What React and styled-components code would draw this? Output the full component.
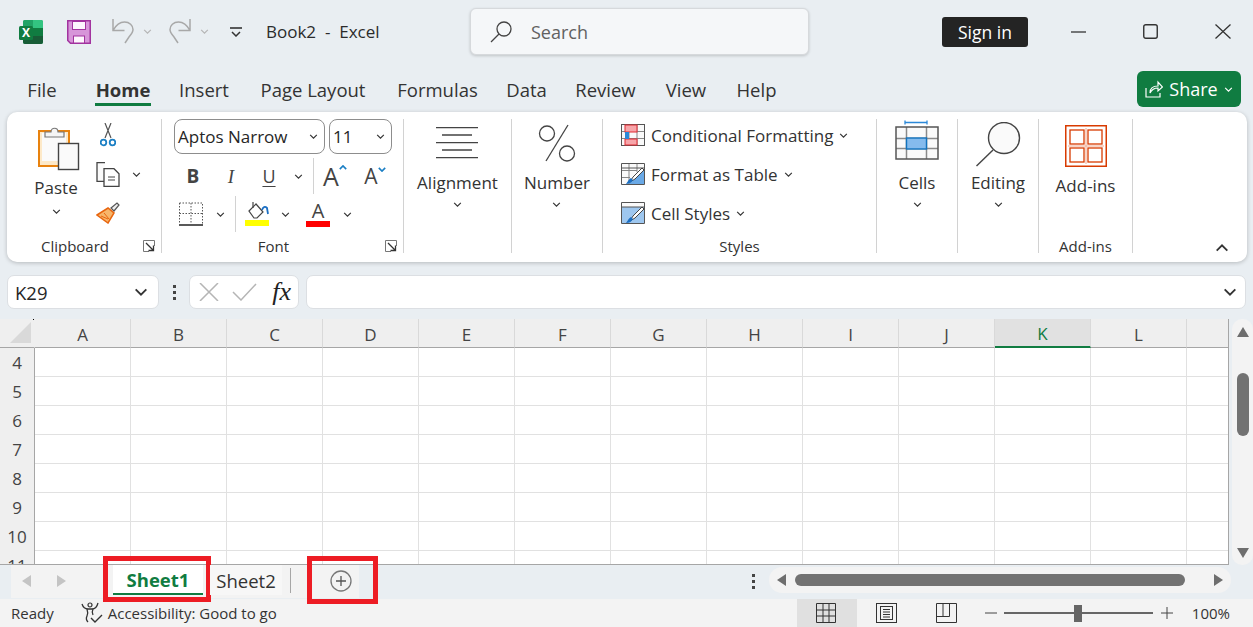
import React from "react"
import styled, { createGlobalStyle } from "styled-components"

const GlobalStyle = createGlobalStyle`
  html, body { margin: 0; padding: 0; background: #e9eef2; }
  body { font-family: "Open Sans", "Noto Sans", sans-serif; color: #2b2b2b; overflow: hidden; }
`;

const Page = styled.div`
  width: 1253px;
  height: 627px;
  display: flex;
  flex-direction: column;
  overflow: hidden;
  background: #e9eef2;
`;

/* title bar */
const TitleBar = styled.div`
  height: 64px;
  flex: none;
  box-sizing: border-box;
  display: flex;
  align-items: center;
  padding: 0 0 1px 19px;
`;

const Qat = styled.div`
  width: ${p => p.$w}px;
  flex: none;
  display: flex;
  align-items: center;
  gap: ${p => p.$gap || 0}px;
`;

const DocName = styled.div`
  width: 204px;
  flex: none;
  font-size: 17px;
  white-space: pre;
`;

const SearchBox = styled.div`
  width: 339px;
  height: 47px;
  flex: none;
  box-sizing: border-box;
  display: flex;
  align-items: center;
  gap: 18px;
  padding-left: 18px;
  background: #f5f7f9;
  border: 1px solid #d6d9dc;
  border-radius: 6px;
  box-shadow: 0 1px 3px rgba(0, 0, 0, 0.18);
  font-size: 18px;
  color: #616161;
`;

const SignIn = styled.div`
  width: 86px;
  height: 30px;
  flex: none;
  margin-left: 133px;
  display: flex;
  align-items: center;
  justify-content: center;
  background: #242424;
  border-radius: 3px;
  color: #fff;
  font-size: 17.5px;
`;

const WindowBtn = styled.div`
  width: ${p => p.$w}px;
  flex: none;
  display: flex;
  justify-content: center;
  margin-left: ${p => p.$ml || 0}px;
`;

/* tabs */
const TabRow = styled.div`
  height: 48px;
  flex: none;
  box-sizing: border-box;
  display: flex;
  align-items: flex-start;
  padding: 7px 12px 0 27px;
`;

const TabItem = styled.div`
  width: ${p => p.$w}px;
  margin-right: ${p => p.$mr}px;
  height: 35px;
  box-sizing: border-box;
  flex: none;
  display: flex;
  justify-content: center;
  align-items: center;
  font-size: 18.5px;
  white-space: nowrap;
  color: #333;
  font-weight: ${p => (p.$active ? 700 : 400)};
  border-bottom: 3px solid ${p => (p.$active ? "#107c41" : "transparent")};
  padding-top: 5px;
`;

const ShareBtn = styled.div`
  margin-left: auto;
  width: 104px;
  height: 36px;
  display: flex;
  align-items: center;
  justify-content: center;
  gap: 6px;
  background: #107c41;
  border-radius: 6px;
  color: #fff;
  font-size: 18px;
`;

/* ribbon */
const Ribbon = styled.div`
  height: 150px;
  flex: none;
  margin: 0 6px 0 7px;
  box-sizing: border-box;
  padding: 7px 0 9px;
  display: flex;
  position: relative;
  background: #fff;
  border-radius: 10px;
  box-shadow: 0 1px 4px rgba(0, 0, 0, 0.22);
`;

const Group = styled.div`
  width: ${p => p.$w}px;
  flex: none;
  box-sizing: border-box;
  border-right: 1px solid #d2d2d2;
  display: flex;
  flex-direction: column;
`;

const GroupBody = styled.div`
  flex: 1;
  min-height: 0;
  display: flex;
  padding-left: ${p => p.$pl || 0}px;
  justify-content: ${p => (p.$center ? "center" : "flex-start")};
`;

const LabelRow = styled.div`
  height: 24px;
  flex: none;
  display: flex;
  align-items: center;
  margin-bottom: -5px;
  margin-top: -6px;
`;

const GroupLabel = styled.div`
  flex: 1;
  text-align: center;
  font-size: 15px;
  color: #333;
`;

const Launcher = styled.div`
  width: 18px;
  flex: none;
  display: flex;
`;

const BigBtn = styled.div`
  display: flex;
  flex-direction: column;
  align-items: center;
  font-size: 17px;
  color: #333;
  width: ${p => p.$w || "auto"};
`;

const IconSlot = styled.div`
  height: ${p => p.$h || 52}px;
  display: flex;
  flex: none;
`;

const BigLabel = styled.div`
  height: 24px;
  line-height: 24px;
  white-space: nowrap;
`;

const ChevSvg = styled.svg`
  width: ${p => p.$s || 9}px;
  height: ${p => Math.round((p.$s || 9) * 0.6)}px;
  flex: none;
  fill: none;
  stroke: ${p => p.$c || "#333"};
  stroke-width: ${p => p.$sw || 1.4};
  margin-top: ${p => p.$mt || 0}px;
  transform: ${p => (p.$up ? "scaleY(-1)" : "none")};
`;

const Chev = props => (
  <ChevSvg viewBox="0 0 10 6" {...props}>
    <path d="M1 1l4 4 4-4" />
  </ChevSvg>
);

const ToolColumn = styled.div`
  display: flex;
  flex-direction: column;
  gap: ${p => p.$gap || 7}px;
`;

const ToolRow = styled.div`
  height: ${p => p.$h || 32}px;
  display: flex;
  align-items: center;
`;

const Tool = styled.div`
  width: ${p => p.$w}px;
  margin-left: ${p => p.$ml || 0}px;
  flex: none;
  display: flex;
  align-items: center;
  justify-content: center;
  color: #333;
`;

const Divider = styled.div`
  width: 1px;
  height: 36px;
  flex: none;
  background: #d2d2d2;
  margin-left: ${p => p.$ml || 0}px;
`;

const Combo = styled.div`
  width: ${p => p.$w}px;
  height: 35px;
  margin-right: ${p => p.$mr || 0}px;
  box-sizing: border-box;
  flex: none;
  display: flex;
  align-items: center;
  justify-content: space-between;
  padding: 0 6px 0 3px;
  border: 1px solid #8d8d8d;
  border-radius: 8px;
  font-size: 17px;
  color: #262626;
  white-space: nowrap;
`;

const FontGlyph = styled.span`
  font-size: ${p => p.$size}px;
  font-weight: ${p => p.$weight || 400};
  font-style: ${p => (p.$italic ? "italic" : "normal")};
  font-family: ${p => (p.$serif ? '"Liberation Serif", serif' : "inherit")};
  text-decoration: ${p => (p.$under ? "underline" : "none")};
  text-underline-offset: 3px;
  text-decoration-thickness: 1px;
  color: #444;
  line-height: 1;
`;

const SwatchGlyph = styled.div`
  display: flex;
  flex-direction: column;
  align-items: center;
  width: 24px;
`;

const Swatch = styled.div`
  width: 24px;
  height: 6px;
  background: ${p => p.$c};
`;

const Caret = styled.span`
  display: inline-flex;
  align-self: flex-start;
  margin-top: ${p => p.$mt || 6}px;
`;

const StyleRow = styled.div`
  height: 32px;
  display: flex;
  align-items: center;
  gap: 6px;
  font-size: 17px;
  color: #333;
  white-space: nowrap;
`;

const CollapseBtn = styled.div`
  position: absolute;
  right: 18px;
  bottom: 10px;
  display: flex;
`;

/* formula bar */
const FormulaBar = styled.div`
  height: 34px;
  flex: none;
  margin: 13px 7px 10px;
  display: flex;
  align-items: stretch;
`;

const FieldBox = styled.div`
  width: ${p => (p.$w ? `${p.$w}px` : "auto")};
  flex: ${p => (p.$w ? "none" : 1)};
  box-sizing: border-box;
  display: flex;
  align-items: center;
  justify-content: ${p => p.$justify || "space-between"};
  padding: ${p => p.$pad || "0 8px"};
  margin-left: ${p => p.$ml || 0}px;
  background: #fff;
  border: 1px solid #dcdfe3;
  border-radius: 7px;
  font-size: 18.5px;
  color: #262626;
`;

const Dots = styled.div`
  width: ${p => p.$w}px;
  flex: none;
  margin-left: ${p => p.$ml || 0};
  display: flex;
  flex-direction: column;
  align-items: center;
  justify-content: center;
  gap: 3px;
  i {
    width: 3px;
    height: 3px;
    background: #444;
    display: block;
  }
`;

/* sheet */
const SheetArea = styled.div`
  height: 246px;
  flex: none;
  display: flex;
`;

const Grid = styled.div`
  width: 1229px;
  flex: none;
  box-sizing: border-box;
  overflow: hidden;
  background: #fff;
  border-right: 1px solid #a6a6a6;
  border-bottom: 1px solid #a6a6a6;
`;

const GridRow = styled.div`
  display: flex;
  height: ${p => p.$h || 29}px;
  box-sizing: border-box;
`;

const Corner = styled.div`
  width: 35px;
  flex: none;
  box-sizing: border-box;
  background: #efefef;
  border-bottom: 1px solid #a6a6a6;
  border-right: 1px solid #efefef;
  position: relative;
  display: flex;
  align-items: flex-end;
  justify-content: flex-end;
  padding: 0 3px 4px 0;
  &::after {
    content: "";
    position: absolute;
    top: 0;
    right: 0;
    width: 1px;
    height: 1px;
    background: #000;
  }
`;

const ColHead = styled.div`
  width: 96px;
  flex: none;
  box-sizing: border-box;
  display: flex;
  align-items: center;
  justify-content: center;
  padding-top: 2px;
  font-size: 17px;
  background: ${p => (p.$active ? "#e1e1e1" : "#efefef")};
  color: ${p => (p.$active ? "#107c41" : "#444")};
  border-right: 1px solid #d9d9d9;
  border-bottom: ${p => (p.$active ? "2px solid #107c41" : "1px solid #a6a6a6")};
`;

const RowHead = styled.div`
  width: 35px;
  flex: none;
  box-sizing: border-box;
  display: flex;
  align-items: center;
  justify-content: center;
  font-size: 17px;
  color: #444;
  background: #efefef;
  border-right: 1px solid #a6a6a6;
`;

const Cell = styled.div`
  width: 96px;
  flex: none;
  box-sizing: border-box;
  border-right: 1px solid #e1e1e1;
  border-bottom: 1px solid #e1e1e1;
`;

const VScroll = styled.div`
  width: 21px;
  margin-left: 3px;
  flex: none;
  display: flex;
  flex-direction: column;
  align-items: center;
  padding-top: 8px;
  box-sizing: border-box;
  background: #f3f3f3;
  border-radius: 10px;
`;

const Tri = styled.div`
  width: 0;
  height: 0;
  flex: none;
  border-style: solid;
  border-color: transparent;
  border-width: ${p =>
    p.$dir === "up" ? "0 6px 10px" : p.$dir === "down" ? "10px 6px 0" : p.$dir === "left" ? "6px 9px 6px 0" : "6px 0 6px 9px"};
  ${p => `border-${{ up: "bottom", down: "top", left: "right", right: "left" }[p.$dir]}-color: ${p.$c || "#6e6e6e"};`}
`;

const VThumb = styled.div`
  width: 12px;
  height: 63px;
  margin: 36px 0 112px;
  flex: none;
  background: #727272;
  border-radius: 6px;
`;

/* sheet tab bar */
const SheetBar = styled.div`
  height: 33px;
  flex: none;
  display: flex;
  padding-left: 11px;
  position: relative;
  z-index: 2;
`;

const SheetTabs = styled.div`
  width: 348px;
  flex: none;
  display: flex;
  background: #f3f3f3;
`;

const NavArrows = styled.div`
  width: 102px;
  flex: none;
  display: flex;
  align-items: center;
  gap: 26px;
  padding: 0 0 2px 11px;
  box-sizing: border-box;
`;

const SheetTab = styled.div`
  width: ${p => p.$w}px;
  height: 30px;
  margin-right: ${p => p.$mr || 0}px;
  flex: none;
  box-sizing: border-box;
  position: relative;
  display: flex;
  align-items: center;
  justify-content: center;
  font-size: 18.5px;
  background: ${p => (p.$active ? "#fff" : "#f7f7f7")};
  color: ${p => (p.$active ? "#107c41" : "#333")};
  font-weight: ${p => (p.$active ? 700 : 400)};
  border-bottom: ${p => (p.$active ? "2px solid #107c41" : "none")};
`;

const TabSep = styled.div`
  width: 1px;
  height: 25px;
  margin-top: 3px;
  flex: none;
  background: #a6a6a6;
`;

const AddSheet = styled.div`
  width: 68px;
  flex: none;
  position: relative;
  display: flex;
  align-items: center;
  justify-content: center;
  padding: 0 0 2px 32px;
  box-sizing: border-box;
`;

const Highlight = styled.div`
  position: absolute;
  box-sizing: border-box;
  top: -9px;
  bottom: ${p => p.$bottom}px;
  left: ${p => p.$left}px;
  right: ${p => p.$right}px;
  border: 5px solid #ed1c24;
  pointer-events: none;
`;

const HScroll = styled.div`
  width: 462px;
  height: 26px;
  margin: 2px 22px 0 0;
  flex: none;
  box-sizing: border-box;
  display: flex;
  align-items: center;
  padding: 0 8px;
  background: #f3f3f3;
  border-radius: 13px;
`;

const HThumb = styled.div`
  width: 390px;
  height: 12px;
  margin: 0 auto 0 9px;
  background: #727272;
  border-radius: 6px;
`;

/* status bar */
const StatusBar = styled.div`
  height: 28px;
  flex: none;
  margin-top: 1px;
  display: flex;
  align-items: center;
  padding: 0 23px 0 11px;
  background: #f3f3f3;
  font-size: 15px;
  color: #333;
`;

const Access = styled.div`
  margin-left: 27px;
  display: flex;
  align-items: center;
  gap: 4px;
`;

const StatusRight = styled.div`
  margin-left: auto;
  display: flex;
  align-items: center;
`;

const ViewBtn = styled.div`
  width: 60px;
  height: 28px;
  flex: none;
  display: flex;
  align-items: center;
  justify-content: center;
  background: ${p => (p.$active ? "#e0e0e0" : "transparent")};
`;

const ZoomSignBox = styled.div`
  flex: none;
  display: flex;
  margin-left: ${p => p.$ml || 0}px;
`;

const ZoomTrack = styled.div`
  width: 149px;
  height: 2px;
  margin: 0 8px 0 7px;
  flex: none;
  display: flex;
  align-items: center;
  justify-content: center;
  background: #666;
  i {
    width: 8px;
    height: 17px;
    display: block;
    background: #666;
  }
`;

const ZoomText = styled.div`
  margin-left: 19px;
  white-space: nowrap;
`;

/* drawings */
const Svg = styled.svg`
  width: ${p => p.$w}px;
  height: ${p => p.$h}px;
  flex: none;
  display: block;
  margin: ${p => p.$m || 0};
  fill: none;
  transform: ${p => (p.$flip ? "scaleX(-1)" : "none")};
`;

const ExcelLogo = () => (
  <Svg $w={24} $h={24} viewBox="0 0 24 24">
    <rect x="4" y="0" width="20" height="24" rx="2" fill="#21a366" />
    <path d="M14 0h8a2 2 0 0 1 2 2v6H14z" fill="#33c481" />
    <path d="M4 2a2 2 0 0 1 2-2h8v8H4z" fill="#21a366" />
    <path d="M14 8h10v8H14z" fill="#107c41" />
    <path d="M14 16h10v6a2 2 0 0 1-2 2h-8z" fill="#185c37" />
    <path d="M4 16h10v8H6a2 2 0 0 1-2-2z" fill="#185c37" />
    <rect x="0" y="6" width="14" height="14" rx="1.5" fill="#107c41" />
    <text x="7" y="17" textAnchor="middle" fontSize="12" fontWeight="700" fill="#fff" fontFamily="Open Sans, sans-serif">X</text>
  </Svg>
);

const SaveIcon = () => (
  <Svg $w={24} $h={24} viewBox="0 0 24 24">
    <path d="M.75.75h22.5v22.5H3.5L.75 20.5z" fill="#d795d9" stroke="#a2339f" strokeWidth="1.5" />
    <rect x="5.5" y="1.5" width="13" height="8" fill="#fdf5fd" stroke="#a2339f" />
    <rect x="6.5" y="16" width="11" height="7" fill="#fdf5fd" stroke="#a2339f" />
  </Svg>
);

const UndoIcon = ({ flip }) => (
  <Svg $w={24} $h={25} $flip={flip} viewBox="0 0 24 25">
    <path d="M2 0v11.500h11.500M2 11.500C5 6 9 3 13.500 3c5 0 8.500 3.500 8.500 7.500 0 3-2 5-4 7.500l-4 6" stroke="#a8a8a8" strokeWidth="1.500" />
  </Svg>
);

const QatDrop = () => (
  <Svg $w={12} $h={10} viewBox="0 0 12 10">
    <path d="M0 1h12" stroke="#333" strokeWidth="1.6" />
    <path d="M2 5l4 4 4-4" stroke="#333" strokeWidth="1.5" />
  </Svg>
);

const SearchIcon = () => (
  <Svg $w={24} $h={24} viewBox="0 0 24 24">
    <circle cx="15" cy="9" r="7" stroke="#444" strokeWidth="1.300" />
    <path d="M10 14l-8 8" stroke="#444" strokeWidth="1.300" />
  </Svg>
);

const MinIcon = () => (
  <Svg $w={15} $h={2} viewBox="0 0 15 2">
    <path d="M0 1h15" stroke="#333" strokeWidth="1.300" />
  </Svg>
);

const MaxIcon = () => (
  <Svg $w={15} $h={15} viewBox="0 0 15 15">
    <rect x=".75" y=".75" width="13.500" height="13.500" rx="2" stroke="#333" strokeWidth="1.400" />
  </Svg>
);

const CloseIcon = () => (
  <Svg $w={16} $h={15} viewBox="0 0 16 15">
    <path d="M.5.500l15 14M15.500.500l-15 14" stroke="#333" strokeWidth="1.300" />
  </Svg>
);

const ShareIcon = () => (
  <Svg $w={18} $h={18} viewBox="0 0 18 18">
    <path d="M1 8v9h14v-4" stroke="#fff" strokeWidth="1.200" />
    <path d="M5 13c0-5 3-7 8-7V2l4.500 5-4.500 4V8c-3 0-6 1-8 5z" stroke="#fff" strokeWidth="1.200" />
  </Svg>
);

const PasteIcon = () => (
  <Svg $w={42} $h={46} $m="6px 0 0 5px" viewBox="0 0 42 46">
    <rect x="1" y="6" width="30" height="35" fill="#fde9c8" stroke="#e8820e" strokeWidth="2" />
    <rect x="4" y="8" width="24" height="28" fill="#fafafa" />
    <path d="M7 12V7h6c0-5 7-5 7 0h6v5z" fill="#f5f5f5" stroke="#777" strokeWidth="1.200" />
    <rect x="20.500" y="18.500" width="20" height="26" fill="#fafafa" stroke="#444" strokeWidth="1.400" />
  </Svg>
);

const CutIcon = () => (
  <Svg $w={16} $h={24} viewBox="0 0 16 24">
    <path d="M11 0L5 15M5 0l6 15" stroke="#555" strokeWidth="1.200" />
    <circle cx="3.500" cy="19.500" r="2.800" stroke="#1b7fc4" strokeWidth="1.800" />
    <circle cx="12.500" cy="19.500" r="2.800" stroke="#1b7fc4" strokeWidth="1.800" />
  </Svg>
);

const CopyIcon = () => (
  <Svg $w={24} $h={25} viewBox="0 0 24 25">
    <path d="M9 .700H1v18.600h8" stroke="#444" strokeWidth="1.300" fill="#fafafa" />
    <path d="M8 6.700h10l5 5v12.600H8z" stroke="#444" strokeWidth="1.300" fill="#fff" />
    <path d="M12 15h7M12 18h7" stroke="#444" />
  </Svg>
);

const BrushIcon = () => (
  <Svg $w={24} $h={22} viewBox="0 0 24 22">
    <path d="M15 6l6-5 2 2-5 6z" stroke="#555" strokeWidth="1.200" fill="#eee" />
    <path d="M1 13l11-7 6 5-6 10z" fill="#f7b66b" stroke="#e8650e" strokeWidth="1.500" />
    <path d="M5 14l7 3M8 11l5 6" stroke="#e8650e" />
  </Svg>
);

const LauncherIcon = () => (
  <Svg $w={12} $h={12} viewBox="0 0 12 12">
    <path d="M11.500 6V.500H.500v11H6" stroke="#777" />
    <path d="M3 3l7 7M10.500 5.500v5h-5" stroke="#333" strokeWidth="1.300" />
  </Svg>
);

const BorderIcon = () => (
  <Svg $w={24} $h={24} viewBox="0 0 24 24">
    <path d="M.5 1h23v21M.5 1v21M12 1v21M.5 11.500h23" stroke="#555" strokeDasharray="1.500 1.500" />
    <path d="M0 23h24" stroke="#222" strokeWidth="1.500" />
  </Svg>
);

const FillIcon = () => (
  <Svg $w={24} $h={18} viewBox="0 0 24 18">
    <path d="M4 9l7-7 7 8-6 6H9z" stroke="#444" strokeWidth="1.200" fill="#fff" />
    <path d="M8 0v6" stroke="#444" strokeWidth="1.200" />
    <path d="M17 8c1-3 3-4 5-2l1 6" stroke="#1b6fc4" strokeWidth="1.800" />
  </Svg>
);

const AlignIcon = () => (
  <Svg $w={42} $h={32} $m="8px 0 0" viewBox="0 0 42 32">
    <path d="M0 .700h42M6 8h30M0 15.700h42M6 23h30M0 30.700h42" stroke="#444" strokeWidth="1.300" />
  </Svg>
);

const PercentIcon = () => (
  <Svg $w={40} $h={38} $m="5px 0 0" viewBox="0 0 40 38">
    <ellipse cx="10" cy="9.500" rx="7.500" ry="7.500" stroke="#444" strokeWidth="1.300" />
    <ellipse cx="30" cy="29.500" rx="7.500" ry="7.500" stroke="#444" strokeWidth="1.300" />
    <path d="M31 1L9 37" stroke="#444" strokeWidth="1.300" />
  </Svg>
);

const CellsIcon = () => (
  <Svg $w={44} $h={42} $m="1px 0 0" viewBox="0 0 44 42">
    <path d="M10 2.500h22M10 .500v4M32 .500v4" stroke="#2b88d8" strokeWidth="1.300" />
    <rect x="1" y="7" width="42" height="32" fill="#fafafa" />
    <path d="M1 18.500h42M1 28.500h42M11.500 7v32M31.500 7v32" stroke="#8a8a8a" strokeWidth="1.500" />
    <rect x="11.500" y="18" width="20" height="11" fill="#85bbed" stroke="#1272bd" strokeWidth="1.400" />
    <rect x="1" y="7" width="42" height="32" stroke="#555" strokeWidth="1.500" />
  </Svg>
);

const EditIcon = () => (
  <Svg $w={46} $h={46} $m="3px 0 0" viewBox="0 0 46 46">
    <circle cx="29" cy="16" r="15.500" fill="#fafafa" stroke="#444" strokeWidth="1.400" />
    <path d="M18 28L1.500 44" stroke="#444" strokeWidth="1.400" />
  </Svg>
);

const AddinsIcon = () => (
  <Svg $w={42} $h={42} $m="6px 0 0" viewBox="0 0 42 42">
    <rect x=".75" y=".75" width="40.500" height="40.500" stroke="#d83b01" strokeWidth="1.500" />
    <rect x="5" y="5" width="14" height="14" stroke="#d83b01" strokeWidth="1.300" />
    <rect x="23" y="5" width="14" height="14" stroke="#d83b01" strokeWidth="1.300" />
    <rect x="5" y="23" width="14" height="14" stroke="#d83b01" strokeWidth="1.300" />
    <rect x="23" y="23" width="14" height="14" stroke="#d83b01" strokeWidth="1.300" />
    <path d="M21 3v36M3 21h36" stroke="#f0a98e" />
  </Svg>
);

const CondIcon = () => (
  <Svg $w={24} $h={22} viewBox="0 0 24 22">
    <rect x=".5" y=".5" width="23" height="21" fill="#fafafa" stroke="#555" />
    <path d="M8 1v20M16 1v20M1 7.500h22M1 14.500h22" stroke="#888" />
    <rect x="4" y="1" width="12" height="7" fill="#f7a6aa" stroke="#e02b33" />
    <rect x="4" y="15" width="12" height="6" fill="#f7a6aa" stroke="#e02b33" />
    <rect x="4" y="8" width="4" height="7" fill="#2b88d8" />
  </Svg>
);

const TableIcon = ({ full }) => (
  <Svg $w={24} $h={22} viewBox="0 0 24 22">
    <path d="M.5 21.500V.5h23v21z" fill="#fafafa" stroke="#555" />
    {full ? (
      <rect x="1" y="5" width="22" height="16" fill="#9ec7ef" />
    ) : (
      <path d="M8 21L23 7v14z" fill="#6aa9e6" />
    )}
    {!full && <path d="M8 1v20M16 1v8M1 7.500h15M1 14.500h8" stroke="#888" />}
    <path d="M1 5h22" stroke="#555" />
    <path d="M9 19l3-5 9-9 2 2-9 9z" fill="#fff" stroke="#444" />
    <path d="M5 21c3 0 5-1 7-4l-2-2c-2 1-3 3-5 6z" fill="#1b6fc4" />
  </Svg>
);

const FxText = styled.span`
  font-family: "Liberation Serif", serif;
  font-style: italic;
  font-weight: 400;
  font-size: 26px;
  color: #222;
  line-height: 1;
`;

const FxWrap = styled.div`
  display: flex;
  align-items: center;
  gap: 13px;
`;

const CancelIcon = () => (
  <Svg $w={20} $h={18} viewBox="0 0 20 18">
    <path d="M1 0l18 18M19 0L1 18" stroke="#b5b5b5" strokeWidth="1.500" />
  </Svg>
);

const CheckIcon = () => (
  <Svg $w={25} $h={18} viewBox="0 0 25 18">
    <path d="M1 9l8 8L24 1" stroke="#b5b5b5" strokeWidth="1.500" />
  </Svg>
);

const CornerTri = () => (
  <Svg $w={21} $h={21} viewBox="0 0 21 21">
    <path d="M21 0v21H0z" fill="#d9d9d9" />
  </Svg>
);

const PlusCircle = () => (
  <Svg $w={22} $h={22} viewBox="0 0 22 22">
    <circle cx="11" cy="11" r="10" stroke="#777" strokeWidth="1.300" />
    <path d="M11 6v10M6 11h10" stroke="#555" strokeWidth="1.300" />
  </Svg>
);

const AccessIcon = () => (
  <Svg $w={23} $h={22} viewBox="0 0 23 22">
    <circle cx="9" cy="3" r="2" stroke="#333" strokeWidth="1.200" />
    <path d="M1 2c1 3 3 5 6 5h4c3 0 5-2 6-6" stroke="#333" strokeWidth="1.300" />
    <path d="M6 7c1 3 1 5 0 7-1 2-1 4 1 6M12 7c-1 2-1 4 0 6" stroke="#333" strokeWidth="1.300" />
    <path d="M10 16l4 4 7-7" stroke="#333" strokeWidth="1.400" />
  </Svg>
);

const NormalView = () => (
  <Svg $w={20} $h={20} $m="0 2px 0 0" viewBox="0 0 20 20">
    <path d="M.5.500h19v19H.5zM7 .500v19M13 .500v19M.5 7h19M.5 13h19" stroke="#333" />
  </Svg>
);

const PageView = () => (
  <Svg $w={21} $h={20} viewBox="0 0 21 20">
    <rect x=".5" y=".5" width="20" height="19" stroke="#333" />
    <rect x="4.500" y="3.500" width="12" height="13" stroke="#333" />
    <path d="M7 6.500h7M7 9h7M7 11.500h7M7 14h7" stroke="#333" />
  </Svg>
);

const BreakView = () => (
  <Svg $w={21} $h={20} viewBox="0 0 21 20">
    <path d="M.5.500h20v19H.5zM.5 13.500h13V.500M7 .500v13" stroke="#333" />
  </Svg>
);

const ZoomSign = ({ plus }) => (
  <Svg $w={12} $h={12} viewBox="0 0 12 12">
    <path d={plus ? "M0 6h12M6 0v12" : "M0 6h12"} stroke="#444" />
  </Svg>
);

const tabs = [
  { name: "File", w: 30, mr: 38 },
  { name: "Home", w: 56, mr: 29, active: true },
  { name: "Insert", w: 48, mr: 32 },
  { name: "Page Layout", w: 106, mr: 31 },
  { name: "Formulas", w: 81, mr: 28 },
  { name: "Data", w: 41, mr: 28 },
  { name: "Review", w: 61, mr: 29 },
  { name: "View", w: 42, mr: 29 },
  { name: "Help", w: 41, mr: 0 },
];

const columns = ["A", "B", "C", "D", "E", "F", "G", "H", "I", "J", "K", "L", ""];
const rows = [4, 5, 6, 7, 8, 9, 10, 11];

export default function App() {
  return (
    <Page>
      <GlobalStyle />
      <TitleBar>
        <Qat $w={48}><ExcelLogo /></Qat>
        <Qat $w={44}><SaveIcon /></Qat>
        <Qat $w={57} $gap={8}><UndoIcon /><Chev $c="#b5b5b5" /></Qat>
        <Qat $w={62} $gap={8}><UndoIcon flip /><Chev $c="#b5b5b5" /></Qat>
        <Qat $w={36}><QatDrop /></Qat>
        <DocName>{"Book2  -  Excel"}</DocName>
        <SearchBox><SearchIcon />Search</SearchBox>
        <SignIn>Sign in</SignIn>
        <WindowBtn $w={15} $ml={43}><MinIcon /></WindowBtn>
        <WindowBtn $w={15} $ml={57}><MaxIcon /></WindowBtn>
        <WindowBtn $w={16} $ml={57}><CloseIcon /></WindowBtn>
      </TitleBar>

      <TabRow>
        {tabs.map(t => (
          <TabItem key={t.name} $w={t.w} $mr={t.mr} $active={t.active}>{t.name}</TabItem>
        ))}
        <ShareBtn><ShareIcon />Share<Chev $c="#fff" /></ShareBtn>
      </TabRow>

      <Ribbon>
        <Group $w={155}>
          <GroupBody $pl={9}>
            <BigBtn $w="80px">
              <IconSlot $h={57}><PasteIcon /></IconSlot>
              <BigLabel>Paste</BigLabel>
              <Chev $mt={9} />
            </BigBtn>
            <ToolColumn>
              <ToolRow><Tool $w={24}><CutIcon /></Tool></ToolRow>
              <ToolRow><Tool $w={24}><CopyIcon /></Tool><Tool $w={20} $ml={6}><Chev /></Tool></ToolRow>
              <ToolRow><Tool $w={24}><BrushIcon /></Tool></ToolRow>
            </ToolColumn>
          </GroupBody>
          <LabelRow><GroupLabel>Clipboard</GroupLabel><Launcher><LauncherIcon /></Launcher></LabelRow>
        </Group>

        <Group $w={242}>
          <GroupBody $pl={12}>
            <ToolColumn $gap={6}>
              <ToolRow $h={35}>
                <Combo $w={151} $mr={4}>Aptos Narrow<Chev /></Combo>
                <Combo $w={63}>11<Chev /></Combo>
              </ToolRow>
              <ToolRow>
                <Tool $w={38}><FontGlyph $size={19} $weight={700}>B</FontGlyph></Tool>
                <Tool $w={38}><FontGlyph $size={19} $italic $serif>I</FontGlyph></Tool>
                <Tool $w={38}><FontGlyph $size={18} $under>U</FontGlyph></Tool>
                <Tool $w={20}><Chev /></Tool>
                <Divider $ml={5} />
                <Tool $w={36} $ml={3}><FontGlyph $size={25}>A</FontGlyph><Caret $mt={1}><Chev $s={8} $c="#1b7fc4" $sw={2} $up /></Caret></Tool>
                <Tool $w={36} $ml={4}><FontGlyph $size={21}>A</FontGlyph><Caret $mt={1}><Chev $s={8} $c="#1b7fc4" $sw={2} /></Caret></Tool>
              </ToolRow>
              <ToolRow>
                <Tool $w={34}><BorderIcon /></Tool>
                <Tool $w={24}><Chev /></Tool>
                <Divider $ml={3} />
                <Tool $w={34} $ml={4}>
                  <SwatchGlyph><FillIcon /><Swatch $c="#ffff00" /></SwatchGlyph>
                </Tool>
                <Tool $w={22}><Chev /></Tool>
                <Tool $w={34} $ml={5}>
                  <SwatchGlyph><FontGlyph $size={20}>A</FontGlyph><Swatch $c="#ff0000" /></SwatchGlyph>
                </Tool>
                <Tool $w={22} $ml={1}><Chev /></Tool>
              </ToolRow>
            </ToolColumn>
          </GroupBody>
          <LabelRow><GroupLabel>Font</GroupLabel><Launcher><LauncherIcon /></Launcher></LabelRow>
        </Group>

        <Group $w={108}>
          <GroupBody $center>
            <BigBtn><IconSlot><AlignIcon /></IconSlot><BigLabel>Alignment</BigLabel><Chev $mt={7} /></BigBtn>
          </GroupBody>
        </Group>

        <Group $w={91}>
          <GroupBody $center>
            <BigBtn><IconSlot><PercentIcon /></IconSlot><BigLabel>Number</BigLabel><Chev $mt={7} /></BigBtn>
          </GroupBody>
        </Group>

        <Group $w={274}>
          <GroupBody $pl={18}>
            <ToolColumn $gap={7}>
              <StyleRow><CondIcon />Conditional Formatting<Chev /></StyleRow>
              <StyleRow><TableIcon />Format as Table<Chev /></StyleRow>
              <StyleRow><TableIcon full />Cell Styles<Chev /></StyleRow>
            </ToolColumn>
          </GroupBody>
          <LabelRow><GroupLabel>Styles</GroupLabel></LabelRow>
        </Group>

        <Group $w={81}>
          <GroupBody $center>
            <BigBtn><IconSlot><CellsIcon /></IconSlot><BigLabel>Cells</BigLabel><Chev $mt={7} /></BigBtn>
          </GroupBody>
        </Group>

        <Group $w={81}>
          <GroupBody $center>
            <BigBtn><IconSlot><EditIcon /></IconSlot><BigLabel>Editing</BigLabel><Chev $mt={7} /></BigBtn>
          </GroupBody>
        </Group>

        <Group $w={94}>
          <GroupBody $center>
            <BigBtn><IconSlot $h={55}><AddinsIcon /></IconSlot><BigLabel>Add-ins</BigLabel></BigBtn>
          </GroupBody>
          <LabelRow><GroupLabel>Add-ins</GroupLabel></LabelRow>
        </Group>

        <CollapseBtn><Chev $s={14} $up /></CollapseBtn>
      </Ribbon>

      <FormulaBar>
        <FieldBox $w={152} $pad="0 10px 0 7px">K29<Chev $s={14} /></FieldBox>
        <Dots $w={30}><i /><i /><i /></Dots>
        <FieldBox $w={110} $pad="0 7px 0 9px">
          <FxWrap><CancelIcon /><CheckIcon /></FxWrap>
          <FxText>fx</FxText>
        </FieldBox>
        <FieldBox $ml={7} $justify="flex-end"><Chev $s={14} /></FieldBox>
      </FormulaBar>

      <SheetArea>
        <Grid>
          <GridRow>
            <Corner><CornerTri /></Corner>
            {columns.map((c, i) => (
              <ColHead key={i} $active={c === "K"}>{c}</ColHead>
            ))}
          </GridRow>
          {rows.map(r => (
            <GridRow key={r}>
              <RowHead>{r}</RowHead>
              {columns.map((c, i) => <Cell key={i} />)}
            </GridRow>
          ))}
        </Grid>
        <VScroll>
          <Tri $dir="up" />
          <VThumb />
          <Tri $dir="down" />
        </VScroll>
      </SheetArea>

      <SheetBar>
        <SheetTabs>
          <NavArrows><Tri $dir="left" $c="#c4c4c4" /><Tri $dir="right" $c="#c4c4c4" /></NavArrows>
          <SheetTab $w={90} $mr={7} $active>
            Sheet1
            <Highlight $left={-10} $right={-8} $bottom={-9} />
          </SheetTab>
          <SheetTab $w={72} $mr={8}>Sheet2</SheetTab>
          <TabSep />
          <AddSheet>
            <PlusCircle />
            <Highlight $left={16} $right={-19} $bottom={-6} />
          </AddSheet>
        </SheetTabs>
        <Dots $w={32} $ml="auto"><i /><i /><i /></Dots>
        <HScroll>
          <Tri $dir="left" />
          <HThumb />
          <Tri $dir="right" />
        </HScroll>
      </SheetBar>

      <StatusBar>
        Ready
        <Access><AccessIcon />Accessibility: Good to go</Access>
        <StatusRight>
          <ViewBtn $active><NormalView /></ViewBtn>
          <ViewBtn><PageView /></ViewBtn>
          <ViewBtn><BreakView /></ViewBtn>
          <ZoomSignBox $ml={8}><ZoomSign /></ZoomSignBox>
          <ZoomTrack><i /></ZoomTrack>
          <ZoomSignBox><ZoomSign plus /></ZoomSignBox>
          <ZoomText>100%</ZoomText>
        </StatusRight>
      </StatusBar>
    </Page>
  );
}
